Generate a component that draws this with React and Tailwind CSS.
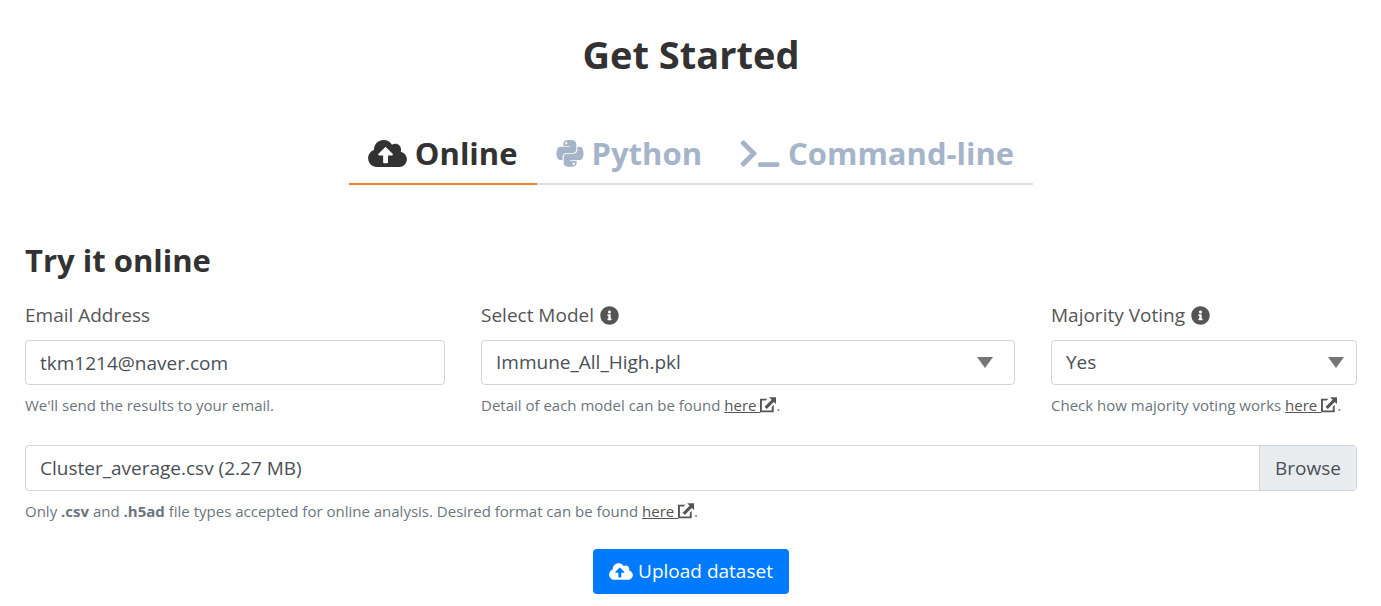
import React from "react";
import { FaCloudUploadAlt, FaPython, FaTerminal, FaInfoCircle } from "react-icons/fa";

function ExternalIcon() {
  return (
    <svg viewBox="0 0 16 16" className="inline-block size-4 align-[-2px]" fill="currentColor" aria-hidden="true">
      <path d="M9.200 .3H16v6.800l-2.200-2.200-7 7-2.200-2.200 7-7z" />
      <path d="M0 1.800h7.500L5.700 3.600H1.900v9.800h9.900V9.700L13.700 7.800v7.500H0z" />
    </svg>
  );
}

function HereLink() {
  return (
    <a href="#docs" className="text-[#555555]">
      <span className="underline whitespace-pre">here </span>
      <ExternalIcon />
    </a>
  );
}

function Tab({ icon: Icon, iconWidth, active, children }) {
  return (
    <button
      type="button"
      role="tab"
      aria-selected={active}
      className={
        "flex items-center gap-2 border-b-2 px-[19px] pb-2 text-[31px] leading-[44px] font-bold " +
        (active ? "border-[#ea842e] text-[#323232]" : "border-[#dbdfe6] text-[#a5b4c8]")
      }
    >
      <Icon className={"h-[31px] " + iconWidth} aria-hidden="true" />
      {children}
    </button>
  );
}

function SelectField({ id, label, value, arrow, children }) {
  return (
    <div>
      <label htmlFor={id} className="mb-[10px] flex items-center gap-[6px] leading-[29px]">
        {label}
        <FaInfoCircle className="size-[19px]" aria-hidden="true" />
      </label>
      <div className="grid items-center">
        <select
          id={id}
          defaultValue={value}
          className="col-start-1 row-start-1 h-[45px] w-full appearance-none rounded border border-[#ced4da] bg-white px-[14px] pb-[1px] text-[#495057]"
        >
          <option>{value}</option>
        </select>
        <svg viewBox="0 0 16 11" className={"pointer-events-none col-start-1 row-start-1 h-[11px] w-4 justify-self-end " + arrow} aria-hidden="true">
          <path d="M0 0h16L8 11z" fill="#757575" />
        </svg>
      </div>
      <p className="mt-2 text-[15px] leading-6 text-[#6c757d]">{children}</p>
    </div>
  );
}

export default function App() {
  return (
    <main className="bg-white pr-6 pl-[25px] pt-[27px] pb-3 font-['Open_Sans',sans-serif] text-[19px] text-[#555555]">
      <h1 className="text-center text-[38px] leading-[54px] font-bold text-[#323232]">Get Started</h1>

      <div role="tablist" className="mt-[50px] flex justify-center">
        <Tab icon={FaCloudUploadAlt} iconWidth="w-[39px]" active>Online</Tab>
        <Tab icon={FaPython} iconWidth="w-[28px]" active={false}>Python</Tab>
        <Tab icon={FaTerminal} iconWidth="w-[40px]" active={false}>Command-line</Tab>
      </div>

      <form onSubmit={(e) => e.preventDefault()}>
        <h2 className="mt-[53px] text-[31px] leading-[44px] font-bold text-[#323232]">Try it online</h2>

        <div className="mt-[19px] grid grid-cols-[420fr_534fr_306fr] gap-9">
          <div>
            <label htmlFor="email" className="mb-[10px] block leading-[29px]">Email Address</label>
            <input
              id="email"
              type="email"
              defaultValue="tkm1214@naver.com"
              className="block h-[45px] w-full rounded border border-[#ced4da] px-[14px] text-[#495057]"
            />
            <p className="mt-2 text-[15px] leading-6 text-[#6c757d]">We'll send the results to your email.</p>
          </div>
          <SelectField id="model" label="Select Model" value="Immune_All_High.pkl" arrow="mr-[22px]">
            Detail of each model can be found <HereLink />.
          </SelectField>
          <SelectField id="voting" label="Majority Voting" value="Yes" arrow="mr-[13px]">
            Check how majority voting works <HereLink />.
          </SelectField>
        </div>

        <div className="mt-7 flex h-[46px] overflow-hidden rounded border border-[#ced4da] text-[#495057]">
          <input
            type="text"
            readOnly
            aria-label="Dataset file"
            defaultValue="Cluster_average.csv (2.27 MB)"
            className="min-w-0 flex-1 px-[14px]"
          />
          <button type="button" className="border-l border-[#ced4da] bg-[#e9ecef] px-[15px]">Browse</button>
        </div>
        <p className="mt-2 text-[15px] leading-6 text-[#6c757d]">
          Only <b>.csv</b> and <b>.h5ad</b> file types accepted for online analysis. Desired format can be found <HereLink />.
        </p>

        <div className="mt-[26px] flex justify-center">
          <button type="submit" className="flex h-[45px] items-center gap-[5px] rounded bg-[#007bff] px-4 text-white">
            <FaCloudUploadAlt className="h-[19px] w-6" aria-hidden="true" />
            Upload dataset
          </button>
        </div>
      </form>
    </main>
  );
}
